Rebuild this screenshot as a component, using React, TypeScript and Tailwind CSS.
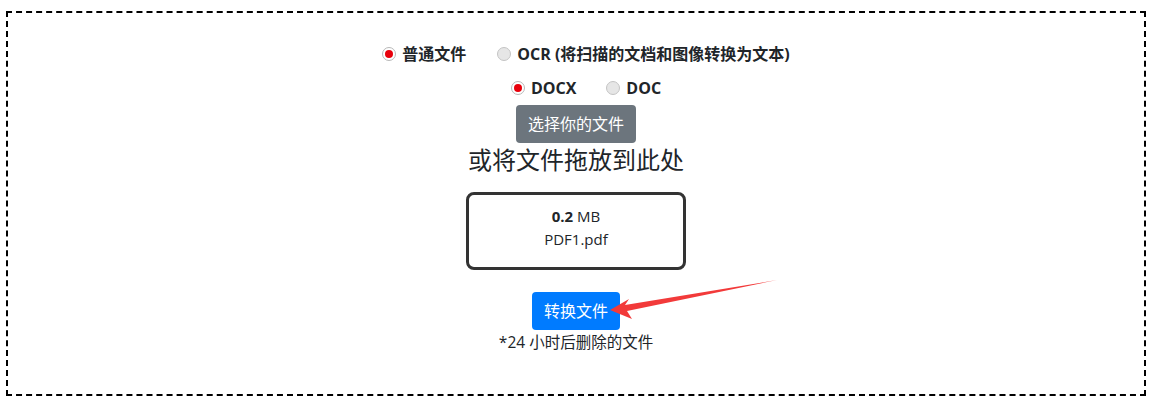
import React, { useState } from 'react';

const Radio: React.FC<{ checked: boolean; label: string; onClick: () => void }> = ({ checked, label, onClick }) => (
    <label onClick={onClick} className="flex items-center gap-[6px] cursor-pointer">
        <span
            className={
                checked
                    ? 'w-[14px] h-[14px] rounded-full border border-[#b8b8b8] bg-white flex items-center justify-center'
                    : 'w-[14px] h-[14px] rounded-full border border-[#c4c4c4] bg-[#e6e6e6] flex items-center justify-center'
            }
        >
            {checked && <span className="w-[8px] h-[8px] rounded-full bg-[#e8000b]" />}
        </span>
        <span className="font-bold text-[16px] leading-[24px] text-[#212529]">{label}</span>
    </label>
);

export default function App() {
    const [mode, setMode] = useState('normal');
    const [format, setFormat] = useState('docx');

    return (
        <div
            className="relative w-[1153px] h-[401px] bg-white pt-[11px] px-[6px]"
            style={{ fontFamily: '"Open Sans", "Noto Sans CJK SC", sans-serif' }}
        >
            <div className="h-[385px] w-[1140px] border-2 border-dashed border-black flex flex-col items-center pt-[29px]">
                <div className="flex items-center gap-[31px] pl-[20px]">
                    <Radio checked={mode === 'normal'} label="普通文件" onClick={() => setMode('normal')} />
                    <Radio checked={mode === 'ocr'} label="OCR (将扫描的文档和图像转换为文本)" onClick={() => setMode('ocr')} />
                </div>
                <div className="flex items-center gap-[30px] mt-[10px] pl-[20px]">
                    <Radio checked={format === 'docx'} label="DOCX" onClick={() => setFormat('docx')} />
                    <Radio checked={format === 'doc'} label="DOC" onClick={() => setFormat('doc')} />
                </div>
                <button className="mt-[5px] h-[38px] px-[12px] rounded-[4px] bg-[#6c757d] text-white text-[16px] leading-[24px]">
                    选择你的文件
                </button>
                <div className="text-[24px] leading-[34px] text-[#212529]">或将文件拖放到此处</div>
                <div className="mt-[15px] w-[220px] h-[78px] border-[3px] border-[#333] rounded-[8px] flex flex-col items-center pt-[10px] text-[15px] leading-[23px] text-[#212529]">
                    <div>
                        <span className="font-bold">0.2</span> MB
                    </div>
                    <div>PDF1.pdf</div>
                </div>
                <button className="mt-[22px] h-[38px] px-[12px] rounded-[4px] bg-[#007bff] text-white text-[16px] leading-[24px]">
                    转换文件
                </button>
                <div className="text-[15.5px] leading-[24px] text-[#212529]">*24 小时后删除的文件</div>
            </div>
            <svg className="absolute left-0 top-0 pointer-events-none" width="1153" height="401">
                <polygon points="610,310 629,299 625,305 777,280 627,311 632,319" fill="#f23a3a" />
            </svg>
        </div>
    );
}
